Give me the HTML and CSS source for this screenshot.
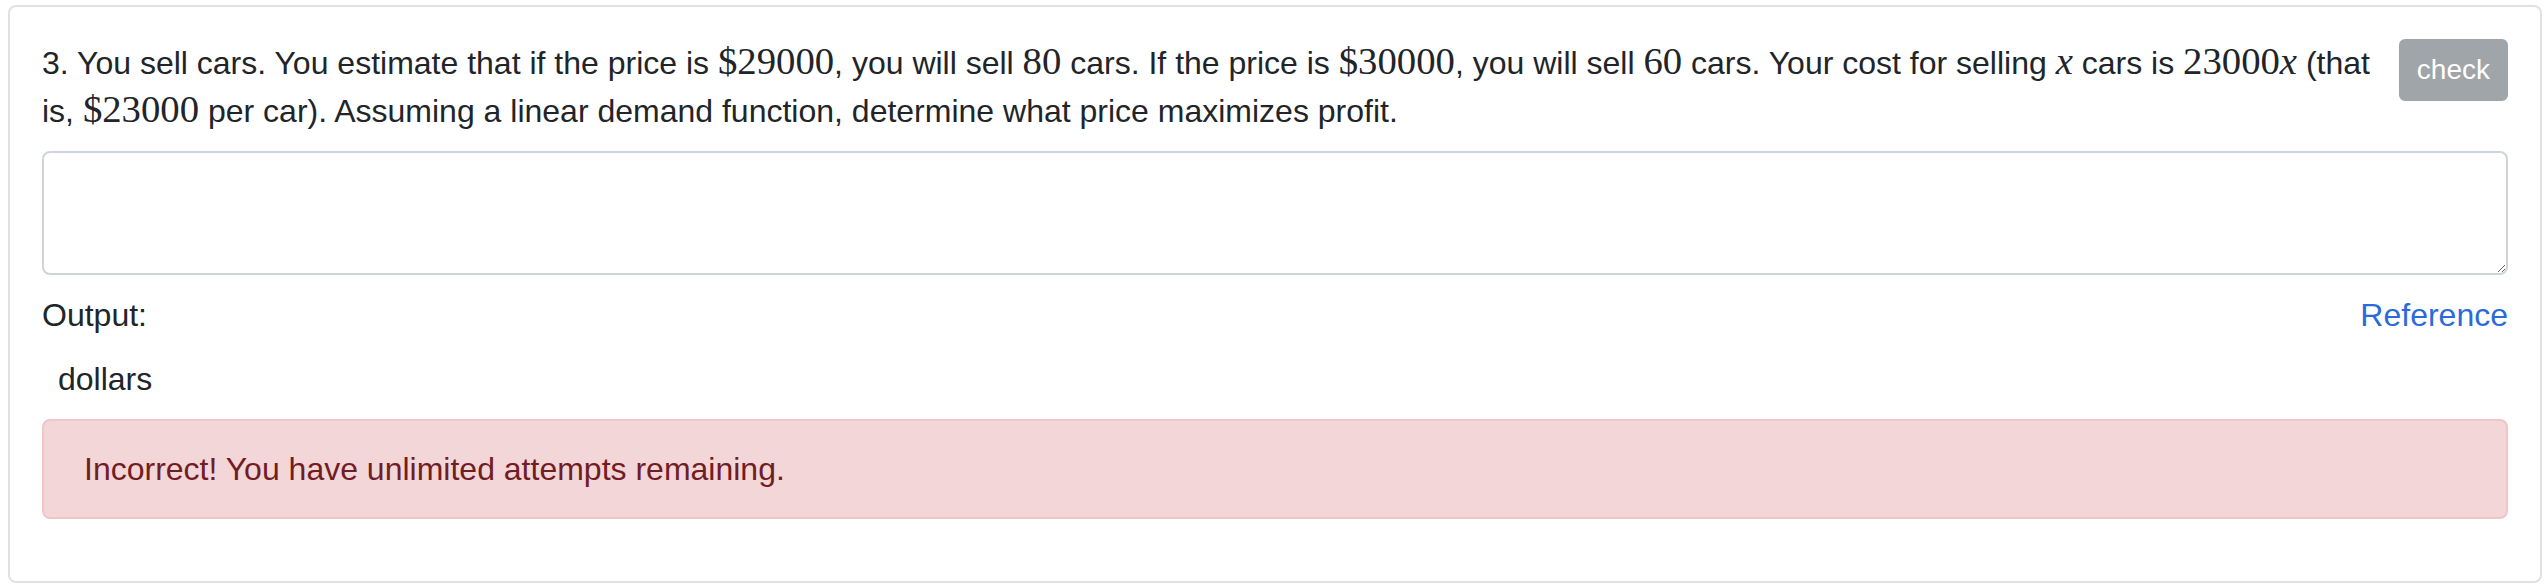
FILE: index.html
```html
<!DOCTYPE html>
<html>
<head>
<meta charset="utf-8">
<link rel="stylesheet" href="styles.css">
</head>
<body>
<div class="card">
  <div class="question-row">
    <div class="question">3. You sell cars. You estimate that if the price is <span class="math">$29000</span>, you will sell <span class="math">80</span> cars. If the price is <span class="math">$30000</span>, you will sell <span class="math">60</span> cars. Your cost for selling <span class="math"><i>x</i></span> cars is <span class="math">23000<i>x</i></span> (that is, <span class="math">$23000</span> per car). Assuming a linear demand function, determine what price maximizes profit.</div>
    <button class="btn-check" disabled>check</button>
  </div>
  <textarea class="answer" rows="2"></textarea>
  <div class="output-row">
    <span class="output-label">Output:</span>
    <a class="ref-link" href="#">Reference</a>
  </div>
  <div class="output-value">dollars</div>
  <div class="alert-danger">Incorrect! You have unlimited attempts remaining.</div>
</div>
</body>
</html>
```
FILE: styles.css
```css
html, body {
  margin: 0;
  padding: 0;
  background: #ffffff;
}
body {
  font-family: "Liberation Sans", Arial, Helvetica, sans-serif;
  font-size: 32px;
  line-height: 48px;
  color: #212529;
}
.card {
  margin: 5px 6px 0 8px;
  border: 2px solid #dfe1e4;
  border-radius: 8px;
  padding: 32px;
  box-sizing: border-box;
  height: 578px;
}
.question-row {
  display: flex;
  align-items: flex-start;
}
.question {
  flex: 1;
  min-width: 0;
}
.math {
  font-family: "Liberation Serif", "Times New Roman", serif;
  font-size: 1.21em;
  line-height: 1;
}
.math i {
  font-style: italic;
}
.btn-check {
  flex: none;
  margin-left: 16px;
  font-family: "Liberation Sans", Arial, Helvetica, sans-serif;
  font-size: 28px;
  line-height: 42px;
  padding: 8px 16px;
  border: 2px solid #a0a5a9;
  background: #a0a5a9;
  color: #ffffff;
  border-radius: 6px;
}
.answer {
  display: block;
  box-sizing: border-box;
  width: 100%;
  height: 124px;
  margin: 16px 0 0;
  padding: 12px 24px;
  border: 2px solid #ced4da;
  border-radius: 8px;
  font-family: "Liberation Sans", Arial, Helvetica, sans-serif;
  font-size: 32px;
  line-height: 48px;
  color: #495057;
  background: #ffffff;
}
.output-row {
  display: flex;
  justify-content: space-between;
  margin-top: 16px;
}
.ref-link {
  color: #2a6bd9;
  text-decoration: none;
}
.output-value {
  padding: 16px 16px 0;
}
.alert-danger {
  margin-top: 16px;
  padding: 24px 40px;
  background: #f2d6d8;
  border: 2px solid #f0c6c9;
  border-radius: 8px;
  color: #721c24;
}
```
